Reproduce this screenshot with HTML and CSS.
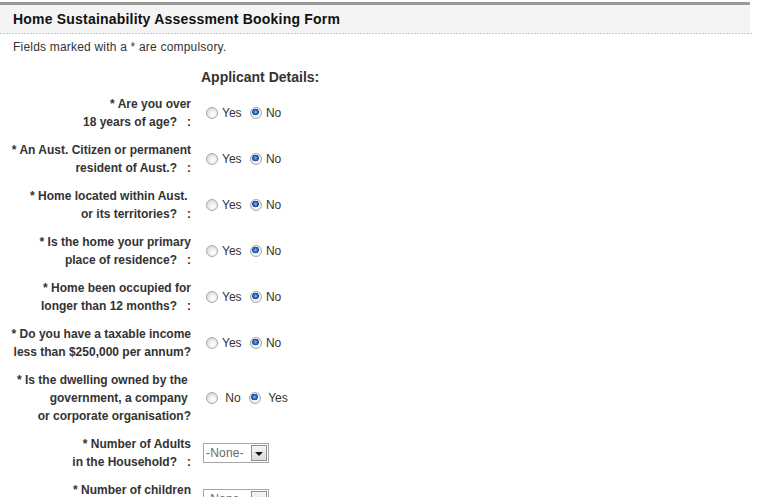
FILE: index.html
```html
<!DOCTYPE html>
<html>
<head>
<meta charset="utf-8">
<link rel="stylesheet" href="styles.css">
</head>
<body>
<div class="page">
  <div class="titlebar"><h1>Home Sustainability Assessment Booking Form</h1></div>
  <div class="rule"></div>
  <p class="note">Fields marked with a * are compulsory.</p>
  <h2 class="section">Applicant Details:</h2>

  <div class="row">
    <div class="label">* Are you over<br>18 years of age? &nbsp; :</div>
    <div class="field"><input type="radio" name="q1">Yes <input type="radio" name="q1" checked>No</div>
  </div>
  <div class="row">
    <div class="label">* An Aust. Citizen or permanent<br>resident of Aust.? &nbsp; :</div>
    <div class="field"><input type="radio" name="q2">Yes <input type="radio" name="q2" checked>No</div>
  </div>
  <div class="row">
    <div class="label">* Home located within Aust.&nbsp;<br>or its territories? &nbsp; :</div>
    <div class="field"><input type="radio" name="q3">Yes <input type="radio" name="q3" checked>No</div>
  </div>
  <div class="row">
    <div class="label">* Is the home your primary<br>place of residence? &nbsp; :</div>
    <div class="field"><input type="radio" name="q4">Yes <input type="radio" name="q4" checked>No</div>
  </div>
  <div class="row">
    <div class="label">* Home been occupied for<br>longer than 12 months? &nbsp; :</div>
    <div class="field"><input type="radio" name="q5">Yes <input type="radio" name="q5" checked>No</div>
  </div>
  <div class="row">
    <div class="label">* Do you have a taxable income<br>less than $250,000 per annum?</div>
    <div class="field"><input type="radio" name="q6">Yes <input type="radio" name="q6" checked>No</div>
  </div>
  <div class="row">
    <div class="label">* Is the dwelling owned by the&nbsp;<br>government, a company&nbsp;<br>or corporate organisation?</div>
    <div class="field"><input type="radio" name="q7"> No <input type="radio" name="q7" checked> Yes</div>
  </div>
  <div class="row">
    <div class="label">* Number of Adults<br>in the Household? &nbsp; :</div>
    <div class="field"><span class="select"><span class="value">-None-</span><span class="btn"><span class="tri"></span></span></span></div>
  </div>
  <div class="row">
    <div class="label">* Number of children<br>in the Household? &nbsp; :</div>
    <div class="field"><span class="select"><span class="value">-None-</span><span class="btn"><span class="tri"></span></span></span></div>
  </div>
</div>
</body>
</html>
```

FILE: styles.css
```css
html, body {
  margin: 0;
  padding: 0;
  background: #fff;
}
body {
  font-family: "Liberation Sans", Arial, sans-serif;
  font-size: 12px;
  color: #333;
}
.page {
  width: 750px;
}
.titlebar {
  margin-top: 2px;
  border-top: 3px solid #999;
  background: #f4f4f4;
  padding: 5px 13px;
}
.titlebar h1 {
  margin: 0;
  font-size: 14px;
  letter-spacing: 0.2px;
  line-height: 18px;
  font-weight: bold;
  color: #111;
}
.rule {
  height: 1px;
  width: 752px;
  background: repeating-linear-gradient(to right, #c9c9c9 0 2px, transparent 2px 3px);
}
.note {
  margin: 4px 0 0 13px;
  line-height: 18px;
  letter-spacing: 0.2px;
}
.section {
  margin: 12px 0 4px 201px;
  font-size: 14px;
  line-height: 18px;
  font-weight: bold;
  color: #333;
}
.row {
  display: flex;
  align-items: center;
  padding: 5px 0;
}
.label {
  width: 191px;
  text-align: right;
  font-weight: bold;
  line-height: 18px;
  white-space: nowrap;
}
.field {
  margin-left: 10px;
  line-height: 18px;
  white-space: nowrap;
}
input[type="radio"] {
  -webkit-appearance: none;
  appearance: none;
  width: 12px;
  height: 12px;
  margin: 3px 4px 0 5px;
  vertical-align: -2px;
  border: 1px solid #a9a9a9;
  border-radius: 50%;
  background: radial-gradient(circle at 60% 65%, #ffffff 0, #f2f2f2 35%, #d6d6d6 80%, #c8c8c8 100%);
  box-sizing: border-box;
}
input[type="radio"]:checked {
  background:
    radial-gradient(circle at 45% 40%, #8cc0f0 0, #2e6fbf 1.8px, #164f9a 3.2px, rgba(255,255,255,0.95) 3.6px, transparent 4.4px),
    radial-gradient(circle at 60% 65%, #ffffff 0, #f2f2f2 35%, #d6d6d6 80%, #c8c8c8 100%);
}
.select {
  display: inline-flex;
  align-items: center;
  margin-left: 2px;
  width: 66px;
  height: 20px;
  box-sizing: border-box;
  border: 1px solid #a6a6a6;
  background: #fff;
  vertical-align: middle;
}
.value {
  flex: 1;
  padding-left: 2px;
  color: #6a6a6a;
  font-size: 12px;
  line-height: 16px;
  letter-spacing: 0.2px;
}
.btn {
  width: 16px;
  height: 16px;
  margin-right: 1px;
  box-sizing: border-box;
  border: 1px solid #8e8e8e;
  background: linear-gradient(#f6f6f6, #dcdcdc);
  display: flex;
  align-items: center;
  justify-content: center;
}
.tri {
  width: 0;
  height: 0;
  border-left: 4px solid transparent;
  border-right: 4px solid transparent;
  border-top: 4px solid #111;
  margin-top: 1px;
}
```
